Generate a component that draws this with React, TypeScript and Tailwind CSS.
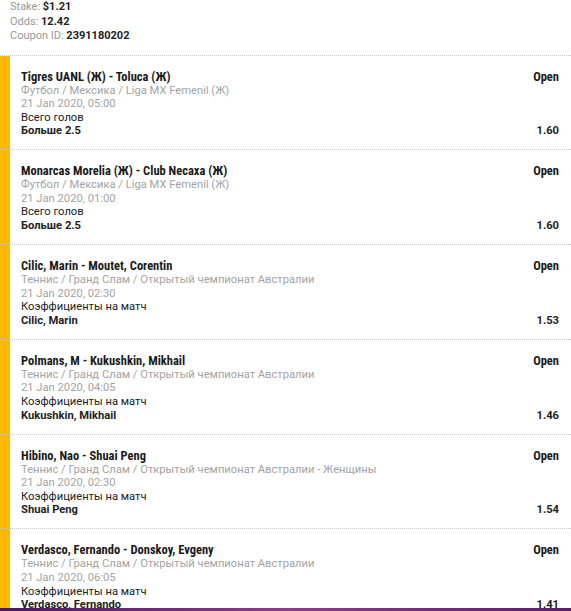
const bets = [
  {
    title: "Tigres UANL (Ж) - Toluca (Ж)",
    path: "Футбол / Мексика / Liga MX Femenil (Ж)",
    date: "21 Jan 2020, 05:00",
    market: "Всего голов",
    pick: "Больше 2.5",
    odds: "1.60",
  },
  {
    title: "Monarcas Morelia (Ж) - Club Necaxa (Ж)",
    path: "Футбол / Мексика / Liga MX Femenil (Ж)",
    date: "21 Jan 2020, 01:00",
    market: "Всего голов",
    pick: "Больше 2.5",
    odds: "1.60",
  },
  {
    title: "Cilic, Marin - Moutet, Corentin",
    path: "Теннис / Гранд Слам / Открытый чемпионат Австралии",
    date: "21 Jan 2020, 02:30",
    market: "Коэффициенты на матч",
    pick: "Cilic, Marin",
    odds: "1.53",
  },
  {
    title: "Polmans, M - Kukushkin, Mikhail",
    path: "Теннис / Гранд Слам / Открытый чемпионат Австралии",
    date: "21 Jan 2020, 04:05",
    market: "Коэффициенты на матч",
    pick: "Kukushkin, Mikhail",
    odds: "1.46",
  },
  {
    title: "Hibino, Nao - Shuai Peng",
    path: "Теннис / Гранд Слам / Открытый чемпионат Австралии - Женщины",
    date: "21 Jan 2020, 02:30",
    market: "Коэффициенты на матч",
    pick: "Shuai Peng",
    odds: "1.54",
  },
  {
    title: "Verdasco, Fernando - Donskoy, Evgeny",
    path: "Теннис / Гранд Слам / Открытый чемпионат Австралии",
    date: "21 Jan 2020, 06:05",
    market: "Коэффициенты на матч",
    pick: "Verdasco, Fernando",
    odds: "1.41",
  },
];

const narrow = "font-['Liberation_Sans_Narrow','Roboto_Condensed',Roboto,sans-serif]";

export default function App() {
  return (
    <div className="h-[611px] overflow-hidden bg-white font-['Roboto',sans-serif] text-[11.2px] leading-[14.5px] text-[#222]">
      <div className="pl-[10px] pb-[11px] text-[11px]">
        <p className="text-[#999]">
          Stake: <span className="font-bold text-[#222]">$1.21</span>
        </p>
        <p className="text-[#999]">
          Odds: <span className="font-bold text-[#222]">12.42</span>
        </p>
        <p className="text-[#999]">
          Coupon ID: <span className="font-bold text-[#222]">2391180202</span>
        </p>
      </div>

      <div className="border-t border-dotted border-[#c8c8c8]" />
      <div className="bg-[linear-gradient(to_right,#ffb800_10px,white_10px)]">
        {bets.map((bet, i) => (
          <div
            key={i}
            className="border-b border-dotted border-[#c8c8c8] pt-[14px] pb-[11.4px] pl-[21px] pr-[12px] leading-[13.6px]"
          >
            <div className="flex justify-between leading-[14px]">
              <span className={`${narrow} text-[12.5px] font-bold text-[#1a1a1a]`}>{bet.title}</span>
              <span className={`${narrow} text-[12.5px] font-bold text-[#1a1a1a]`}>Open</span>
            </div>
            <p className="text-[#a3a3a3]">{bet.path}</p>
            <p className="text-[#a3a3a3]">{bet.date}</p>
            <p>{bet.market}</p>
            <div className="flex justify-between font-bold">
              <span>{bet.pick}</span>
              <span>{bet.odds}</span>
            </div>
          </div>
        ))}
      </div>

      <div className="fixed bottom-0 left-0 right-0 h-[3px] bg-[linear-gradient(to_right,#4a1760,#8a3f88_50%,#5a1e68)]" />
    </div>
  );
}
